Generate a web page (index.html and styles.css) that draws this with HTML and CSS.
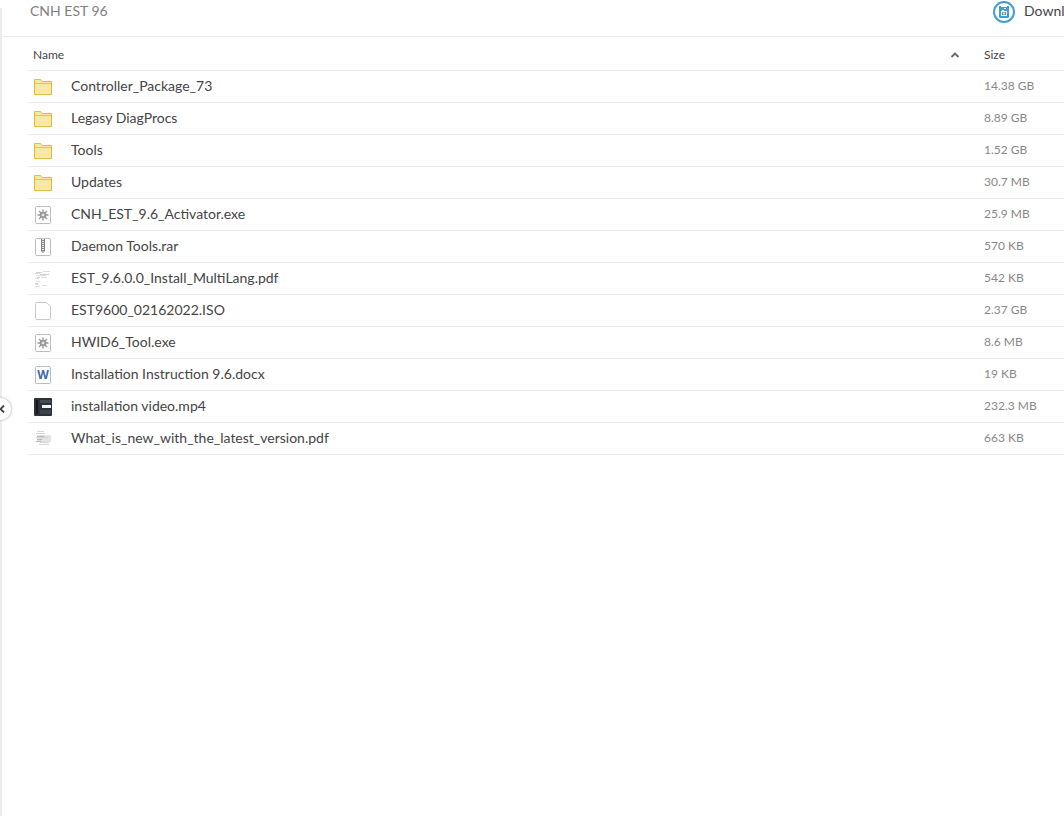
FILE: index.html
```
<!DOCTYPE html>
<html lang="en">
<head>
    <meta charset="UTF-8">
    <meta name="viewport" content="width=device-width, initial-scale=1.0">
    <title>CNH EST 96</title>
    <link rel="stylesheet" href="styles.css">
</head>
<body>
    <!-- Shared icons -->
    <svg class="icon-defs" aria-hidden="true">
        <symbol id="icon-folder" viewBox="0 0 20 20">
            <path d="M1.5 17.5V2.5H7.5L9.5 4.5H18.5V17.5Z" fill="#fae7a5" stroke="#e5b93c"/>
            <path d="M2 6.5H18" stroke="#e8c04c"/>
        </symbol>
        <symbol id="icon-exe" viewBox="0 0 20 20">
            <rect x="2.5" y="1.5" width="15" height="17" rx="1" fill="#fff" stroke="#bcbcbc"/>
            <path d="M10 4.5V15.5M4.5 10H15.5M6 6L14 14M14 6L6 14" stroke="#999" stroke-width="1.3"/>
            <circle cx="10" cy="10" r="3.3" fill="#969696"/>
            <circle cx="10" cy="10" r="1.4" fill="#e8e8e8"/>
        </symbol>
        <symbol id="icon-rar" viewBox="0 0 20 20">
            <rect x="2.5" y="1.5" width="15" height="17" rx="1" fill="#fff" stroke="#bcbcbc"/>
            <path d="M8.5 2V14Q10 17 11.5 14V2" fill="#eee" stroke="#808080"/>
            <path d="M9 3.5H11M9 5.5H11M9 7.5H11M9 9.5H11M9 11.5H11M9 13.5H11" stroke="#888"/>
        </symbol>
        <symbol id="icon-file" viewBox="0 0 20 20">
            <path d="M3.5 1.5H13.5L17.5 5.5V17.5Q17.5 18.5 16.5 18.5H3.5Q2.5 18.5 2.5 17.5V2.5Q2.5 1.5 3.5 1.5Z" fill="#fff" stroke="#c8c8c8"/>
        </symbol>
        <symbol id="icon-doc" viewBox="0 0 20 20">
            <rect x="2.5" y="1.5" width="15" height="17" rx="1" fill="#fff" stroke="#b3bdcb"/>
            <text class="doc-letter" x="10" y="14" text-anchor="middle">W</text>
        </symbol>
        <symbol id="icon-page" viewBox="0 0 20 20">
            <path d="M10 2.5H17M2 4.5H7M3 6.5H13M2 9.5H6M8 8.5H14M3 12.5H7M2 15.5H6M9 16.5H14M2 17.5H7" stroke="#dedede"/>
            <path d="M3 3.5H9M7 5.5H16M4 8.5H7M2 14.5H5" stroke="#d0d0d0"/>
        </symbol>
        <symbol id="icon-news" viewBox="0 0 20 20">
            <rect x="4" y="6" width="14" height="7" fill="#e4e4e4"/>
            <path d="M4 2.5H11M3 4.5H12M3 8.5H15M7 13.5H16M6 15.5H16" stroke="#d4d4d4"/>
            <path d="M4 7.5H11M4 10.5H9M3 12.5H8" stroke="#b8b8b8"/>
        </symbol>
        <symbol id="icon-video" viewBox="0 0 20 20">
            <rect x="1" y="1" width="18" height="18" rx="1" fill="#2e3238"/>
            <rect x="3" y="3" width="2" height="14" fill="#15181c"/>
            <rect x="7" y="3" width="11" height="3" fill="#454b54"/>
            <rect x="9" y="8" width="9" height="3" fill="#f4f4f4"/>
            <rect x="7" y="13" width="11" height="4" fill="#3d434b"/>
        </symbol>
    </svg>

    <div class="page">
        <aside class="edge">
            <button class="collapse" type="button" aria-label="Collapse panel">
                <svg width="22" height="22" viewBox="0 0 22 22"><path d="M15 7.5L11.5 11L15 14.5" fill="none" stroke="#444" stroke-width="1.8"/></svg>
            </button>
        </aside>

        <main class="content">
            <header class="toolbar">
                <h1>CNH EST 96</h1>
                <button class="download" type="button">
                    <svg width="24" height="24" viewBox="0 0 24 24">
                        <circle cx="12" cy="12" r="10" fill="#fff" stroke="#419fd6" stroke-width="2"/>
                        <path d="M7 6H9V7H15V6H17V17L16 18H8L7 17Z" fill="#419fd6"/>
                        <path d="M10 6.5H12M12 8.5H14M10 10.5H12" stroke="#fff"/>
                        <rect x="9.5" y="11.5" width="5" height="4" fill="#419fd6" stroke="#fff"/>
                        <circle cx="12" cy="13.5" r="1" fill="#fff"/>
                    </svg>
                    <span>Download</span>
                </button>
            </header>

            <table class="files">
                <colgroup>
                    <col class="col-type">
                    <col>
                    <col class="col-size">
                </colgroup>
                <thead>
                    <tr>
                        <th class="col-name" colspan="2">
                            <div class="sort">
                                <span>Name</span>
                                <svg width="10" height="8" viewBox="0 0 10 8"><path d="M1.5 6L5 2.5L8.5 6" fill="none" stroke="#666" stroke-width="1.8"/></svg>
                            </div>
                        </th>
                        <th>Size</th>
                    </tr>
                </thead>
                <tbody>
                    <tr>
                        <td class="type"><svg><use href="#icon-folder"/></svg></td>
                        <td><a href="#">Controller_Package_73</a></td>
                        <td class="size">14.38 GB</td>
                    </tr>
                    <tr>
                        <td class="type"><svg><use href="#icon-folder"/></svg></td>
                        <td><a href="#">Legasy DiagProcs</a></td>
                        <td class="size">8.89 GB</td>
                    </tr>
                    <tr>
                        <td class="type"><svg><use href="#icon-folder"/></svg></td>
                        <td><a href="#">Tools</a></td>
                        <td class="size">1.52 GB</td>
                    </tr>
                    <tr>
                        <td class="type"><svg><use href="#icon-folder"/></svg></td>
                        <td><a href="#">Updates</a></td>
                        <td class="size">30.7 MB</td>
                    </tr>
                    <tr>
                        <td class="type"><svg><use href="#icon-exe"/></svg></td>
                        <td><a href="#">CNH_EST_9.6_Activator.exe</a></td>
                        <td class="size">25.9 MB</td>
                    </tr>
                    <tr>
                        <td class="type"><svg><use href="#icon-rar"/></svg></td>
                        <td><a href="#">Daemon Tools.rar</a></td>
                        <td class="size">570 KB</td>
                    </tr>
                    <tr>
                        <td class="type"><svg><use href="#icon-page"/></svg></td>
                        <td><a href="#">EST_9.6.0.0_Install_MultiLang.pdf</a></td>
                        <td class="size">542 KB</td>
                    </tr>
                    <tr>
                        <td class="type"><svg><use href="#icon-file"/></svg></td>
                        <td><a href="#">EST9600_02162022.ISO</a></td>
                        <td class="size">2.37 GB</td>
                    </tr>
                    <tr>
                        <td class="type"><svg><use href="#icon-exe"/></svg></td>
                        <td><a href="#">HWID6_Tool.exe</a></td>
                        <td class="size">8.6 MB</td>
                    </tr>
                    <tr>
                        <td class="type"><svg><use href="#icon-doc"/></svg></td>
                        <td><a href="#">Installation Instruction 9.6.docx</a></td>
                        <td class="size">19 KB</td>
                    </tr>
                    <tr>
                        <td class="type"><svg><use href="#icon-video"/></svg></td>
                        <td><a href="#">installation video.mp4</a></td>
                        <td class="size">232.3 MB</td>
                    </tr>
                    <tr>
                        <td class="type"><svg><use href="#icon-news"/></svg></td>
                        <td><a href="#">What_is_new_with_the_latest_version.pdf</a></td>
                        <td class="size">663 KB</td>
                    </tr>
                </tbody>
            </table>
        </main>
    </div>
</body>
</html>
```
FILE: styles.css
```
* {
    box-sizing: border-box;
}

body {
    margin: 0;
    font-family: Lato, "Liberation Sans", sans-serif;
    font-size: 14px;
    color: #444;
    background-color: #fff;
}

button {
    border: none;
    padding: 0;
    background: none;
    font: inherit;
    color: inherit;
    cursor: pointer;
}

.icon-defs {
    display: none;
}

.page {
    display: flex;
    min-height: 100vh;
    overflow: hidden;
}

/* Left edge with the round collapse handle */
.edge {
    position: relative;
    width: 2px;
    margin-top: 8px;
    background-color: #ebebeb;
}

.collapse {
    position: absolute;
    top: 50%;
    right: -10px;
    width: 24px;
    height: 24px;
    margin-top: -15px;
    border: 1px solid #ddd;
    border-radius: 50%;
    background-color: #fff;
    box-shadow: 0 0 2px rgba(0, 0, 0, 0.2);
}

.collapse svg {
    display: block;
}

.content {
    flex: 1;
    min-width: 0;
}

.toolbar {
    display: flex;
    justify-content: space-between;
    height: 37px;
    padding-left: 28px;
    border-bottom: 1px solid #ebebeb;
}

.toolbar h1 {
    margin: 0;
    font-size: 14px;
    font-weight: normal;
    line-height: 22px;
    color: #808080;
}

.download {
    display: flex;
    align-items: flex-start;
    gap: 8px;
    width: 72px;
    height: 24px;
    line-height: 22px;
    overflow: hidden;
}

.download svg {
    flex: none;
}

/* File list */
.files {
    width: calc(100% - 26px);
    margin-left: 26px;
    border-collapse: separate;
    border-spacing: 0;
    table-layout: fixed;
}

.col-type {
    width: 43px;
}

.col-size {
    width: 80px;
}

.files th,
.files td {
    padding: 0;
    border-bottom: 1px solid #ebebeb;
    text-align: left;
}

.files th {
    height: 34px;
    padding-top: 2px;
    font-size: 12px;
    font-weight: normal;
}

.files td {
    height: 32px;
    padding-bottom: 2px;
    line-height: 20px;
}

.files .col-name {
    padding-left: 5px;
}

.sort {
    display: flex;
    align-items: center;
    justify-content: space-between;
    padding-right: 24px;
}

.files .type {
    padding-left: 5px;
    padding-bottom: 0;
}

.type svg {
    display: block;
    width: 20px;
    height: 20px;
}

.doc-letter {
    font-family: "Open Sans", sans-serif;
    font-size: 12px;
    font-weight: 700;
    fill: #4169a8;
}

.files a {
    color: inherit;
    text-decoration: none;
}

.files a:hover {
    text-decoration: underline;
}

.files .size {
    font-size: 12px;
    color: #888;
}
```
